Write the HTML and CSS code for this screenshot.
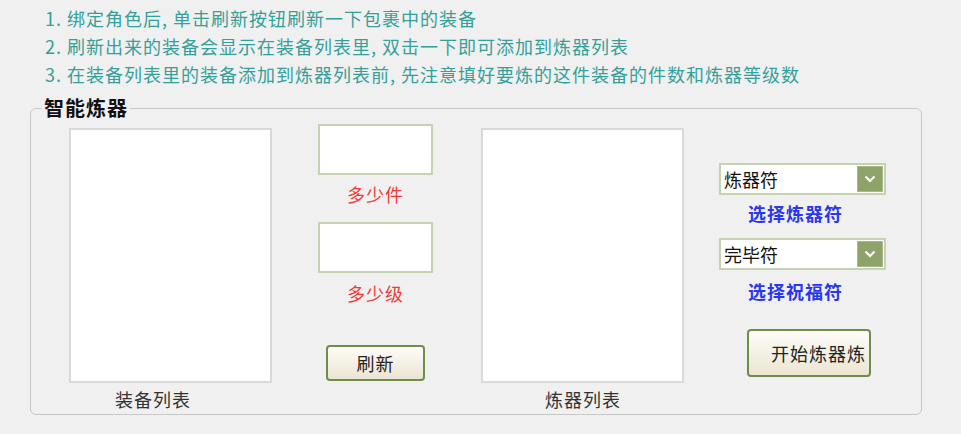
FILE: index.html
```html
<!DOCTYPE html>
<html lang="zh-CN">
<head>
    <meta charset="UTF-8">
    <meta name="viewport" content="width=device-width, initial-scale=1.0">
    <title>智能炼器</title>
    <link rel="stylesheet" href="styles.css">
</head>
<body>
    <div class="tips">
        <p>1. 绑定角色后, 单击刷新按钮刷新一下包裹中的装备</p>
        <p>2. 刷新出来的装备会显示在装备列表里, 双击一下即可添加到炼器列表</p>
        <p>3. 在装备列表里的装备添加到炼器列表前, 先注意填好要炼的这件装备的件数和炼器等级数</p>
    </div>
    <fieldset class="group">
        <legend>智能炼器</legend>
        <div class="row">
            <div class="list-col">
                <div class="listbox" id="equipList"></div>
                <div class="list-label first">装备列表</div>
            </div>
            <div class="count-col">
                <input type="text" class="num-input" id="count">
                <div class="red-label">多少件</div>
                <input type="text" class="num-input" id="level">
                <div class="red-label">多少级</div>
                <button class="btn refresh-btn" id="refreshButton">刷新</button>
            </div>
            <div class="list-col">
                <div class="listbox" id="refineList"></div>
                <div class="list-label second">炼器列表</div>
            </div>
            <div class="option-col">
                <div class="combo">
                    <span>炼器符</span>
                    <span class="combo-btn">
                        <svg width="12" height="8" viewBox="0 0 12 8"><path d="M1.5 1.5 L6 6 L10.5 1.5" fill="none" stroke="#fff" stroke-width="2.2"/></svg>
                    </span>
                </div>
                <div class="blue-label">选择炼器符</div>
                <div class="combo">
                    <span>完毕符</span>
                    <span class="combo-btn">
                        <svg width="12" height="8" viewBox="0 0 12 8"><path d="M1.5 1.5 L6 6 L10.5 1.5" fill="none" stroke="#fff" stroke-width="2.2"/></svg>
                    </span>
                </div>
                <div class="blue-label">选择祝福符</div>
                <button class="btn start-btn" id="startButton">开始炼器炼</button>
            </div>
        </div>
    </fieldset>
</body>
</html>
```

FILE: styles.css
```css
body {
    font-family: "Noto Sans CJK SC", "Liberation Sans", sans-serif;
    background-color: #f0f0f0;
    margin: 0;
    padding-top: 4px;
    width: 961px;
    height: 434px;
    overflow: hidden;
}

.tips {
    padding-left: 45px;
}

.tips p {
    margin: 0;
    font-size: 18px;
    letter-spacing: 1px;
    line-height: 28px;
    color: #35a09a;
    white-space: nowrap;
}

.group {
    margin: 10px 0 0 30px;
    width: 892px;
    padding: 0 0 4px 0;
    border: 1px solid #c8c8c8;
    border-radius: 6px;
    box-sizing: border-box;
    min-inline-size: 0;
}

.group legend {
    margin-left: 11px;
    padding: 0 2px;
    font-size: 20px;
    font-weight: bold;
    line-height: 20px;
    letter-spacing: 1px;
    color: #111;
}

.row {
    display: flex;
    padding-left: 38px;
}

.list-col {
    padding-top: 10px;
}

.listbox {
    width: 203px;
    height: 255px;
    background: #fff;
    border: 2px solid #d9d9d9;
    box-sizing: border-box;
}

.list-label {
    margin-top: 5px;
    font-size: 18px;
    letter-spacing: 1px;
    line-height: 22px;
    color: #333;
}

.list-label.first {
    padding-left: 46px;
}

.list-label.second {
    padding-left: 64px;
}

.count-col {
    display: flex;
    flex-direction: column;
    align-items: center;
    width: 115px;
    margin: 6px 48px 0 46px;
}

.num-input {
    width: 115px;
    height: 51px;
    margin: 0;
    padding: 0 4px;
    border: 2px solid #c6d3b2;
    background: #fff;
    box-sizing: border-box;
    font-size: 16px;
}

.red-label {
    margin: 9px 0 18px;
    font-size: 18px;
    letter-spacing: 1px;
    line-height: 20px;
    color: #ee3a36;
}

.red-label + .num-input + .red-label {
    margin: 10px 0 0;
}

.btn {
    font-family: "Noto Sans CJK SC", sans-serif;
    font-size: 18px;
    letter-spacing: 1px;
    color: #222;
    border: 2px solid #708c4c;
    border-radius: 4px;
    background: linear-gradient(#fdfcf8, #ece5d3);
    cursor: pointer;
    box-sizing: border-box;
    padding: 0;
}

.refresh-btn {
    width: 99px;
    height: 36px;
    margin-top: 42px;
}

.option-col {
    display: flex;
    flex-direction: column;
    align-items: center;
    width: 167px;
    margin-left: 35px;
    padding-top: 45px;
}

.combo {
    display: flex;
    align-items: center;
    justify-content: space-between;
    width: 167px;
    height: 32px;
    padding: 0 1px 0 3px;
    border: 2px solid #c6d3b2;
    background: #fff;
    box-sizing: border-box;
    font-size: 18px;
    color: #111;
}

.combo-btn {
    display: flex;
    align-items: center;
    justify-content: center;
    width: 26px;
    height: 26px;
    background: #8ea36a;
    border: 1px solid #a9b98d;
    box-sizing: border-box;
}

.blue-label {
    margin: 8px 0 15px;
    font-size: 18px;
    letter-spacing: 1px;
    line-height: 20px;
    font-weight: bold;
    color: #2a36f0;
    padding-right: 14px;
}

.blue-label + .combo + .blue-label {
    margin: 11px 0 0;
}

.start-btn {
    width: 124px;
    height: 48px;
    margin-top: 28px;
    margin-left: 13px;
    padding-left: 22px;
    text-align: left;
    overflow: hidden;
    white-space: nowrap;
}
```
